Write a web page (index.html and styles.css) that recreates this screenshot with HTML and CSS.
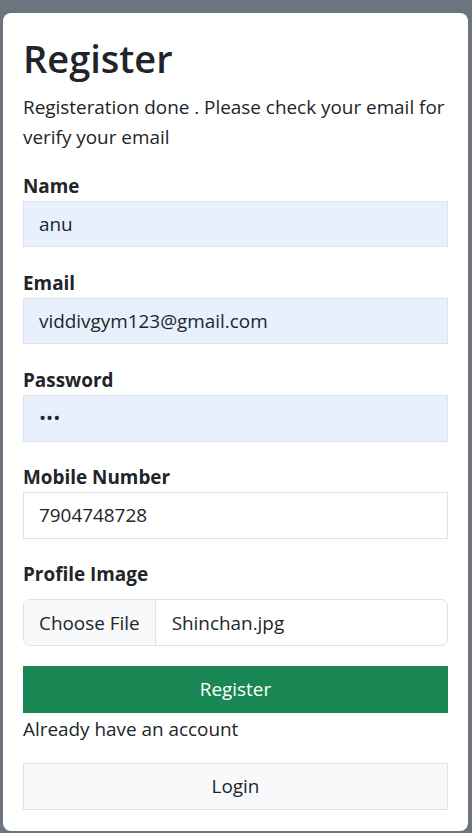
FILE: index.html
```html
<!DOCTYPE html>
<html lang="en">
<head>
<meta charset="utf-8">
<title>Register</title>
<link rel="stylesheet" href="styles.css">
</head>
<body>
<div class="card">
  <h1 class="title">Register</h1>
  <p class="notice">Registeration done . Please check your email for verify your email</p>
  <form class="form">
    <div class="field">
      <label class="label" for="name">Name</label>
      <input class="control autofill" id="name" type="text" value="anu">
    </div>
    <div class="field">
      <label class="label" for="email">Email</label>
      <input class="control autofill" id="email" type="text" value="viddivgym123@gmail.com">
    </div>
    <div class="field">
      <label class="label" for="pw">Password</label>
      <input class="control autofill" id="pw" type="password" value="abc">
    </div>
    <div class="field">
      <label class="label" for="mobile">Mobile Number</label>
      <input class="control" id="mobile" type="text" value="7904748728">
    </div>
    <div class="field file-field">
      <label class="label">Profile Image</label>
      <div class="file-control">
        <span class="file-btn">Choose File</span>
        <span class="file-name">Shinchan.jpg</span>
      </div>
    </div>
    <div class="btn btn-success">Register</div>
  </form>
  <div class="already">Already have an account</div>
  <div class="btn btn-light">Login</div>
</div>
</body>
</html>
```

FILE: styles.css
```css
html, body {
  margin: 0;
  padding: 0;
}
body {
  background: #6c757d;
  padding: 13px 4px 4px 3px;
  font-family: "Open Sans", sans-serif;
  font-size: 18.9px;
  color: #212529;
}
.card {
  background: #fff;
  border-radius: 8px;
  padding: 20px 20px 21px;
}
.title {
  font-size: 38px;
  font-weight: 600;
  line-height: 46px;
  padding-top: 2px;
  margin: 0 0 9px;
}
.notice {
  margin: 0 0 18px;
  padding-top: 2px;
  line-height: 30px;
}
.form {
  margin: 0;
}
.field {
  margin-bottom: 19.7px;
}
.label {
  display: block;
  font-weight: 700;
  line-height: 29px;
  padding-top: 2px;
  margin-bottom: 0;
}
.control {
  display: block;
  box-sizing: border-box;
  width: 100%;
  height: 46.4px;
  margin: 0;
  padding: 0 15px;
  border: 1px solid #dee2e6;
  border-radius: 0;
  background: #fff;
  color: #212529;
  font: inherit;
  outline: none;
}
.control.autofill {
  background: #e8f0fe;
}
.file-field .label {
  margin-bottom: 10px;
}
.file-field {
  margin-bottom: 20.3px;
}
.file-control {
  display: flex;
  align-items: center;
  box-sizing: border-box;
  height: 46.4px;
  border: 1px solid #dee2e6;
  border-radius: 7px;
  overflow: hidden;
}
.file-btn {
  display: flex;
  align-items: center;
  height: 100%;
  padding: 0 15px;
  background: #f8f9fa;
  border-right: 1px solid #dee2e6;
}
.file-name {
  padding-left: 16px;
}
.btn {
  box-sizing: border-box;
  height: 46.7px;
  display: flex;
  align-items: center;
  justify-content: center;
}
.btn-success {
  background: #198754;
  color: #fff;
}
.btn-light {
  background: #f8f9fa;
  border: 1px solid #dee2e6;
  color: #212529;
}
.already {
  line-height: 29px;
  padding-top: 2px;
  margin-bottom: 19.3px;
}
```
